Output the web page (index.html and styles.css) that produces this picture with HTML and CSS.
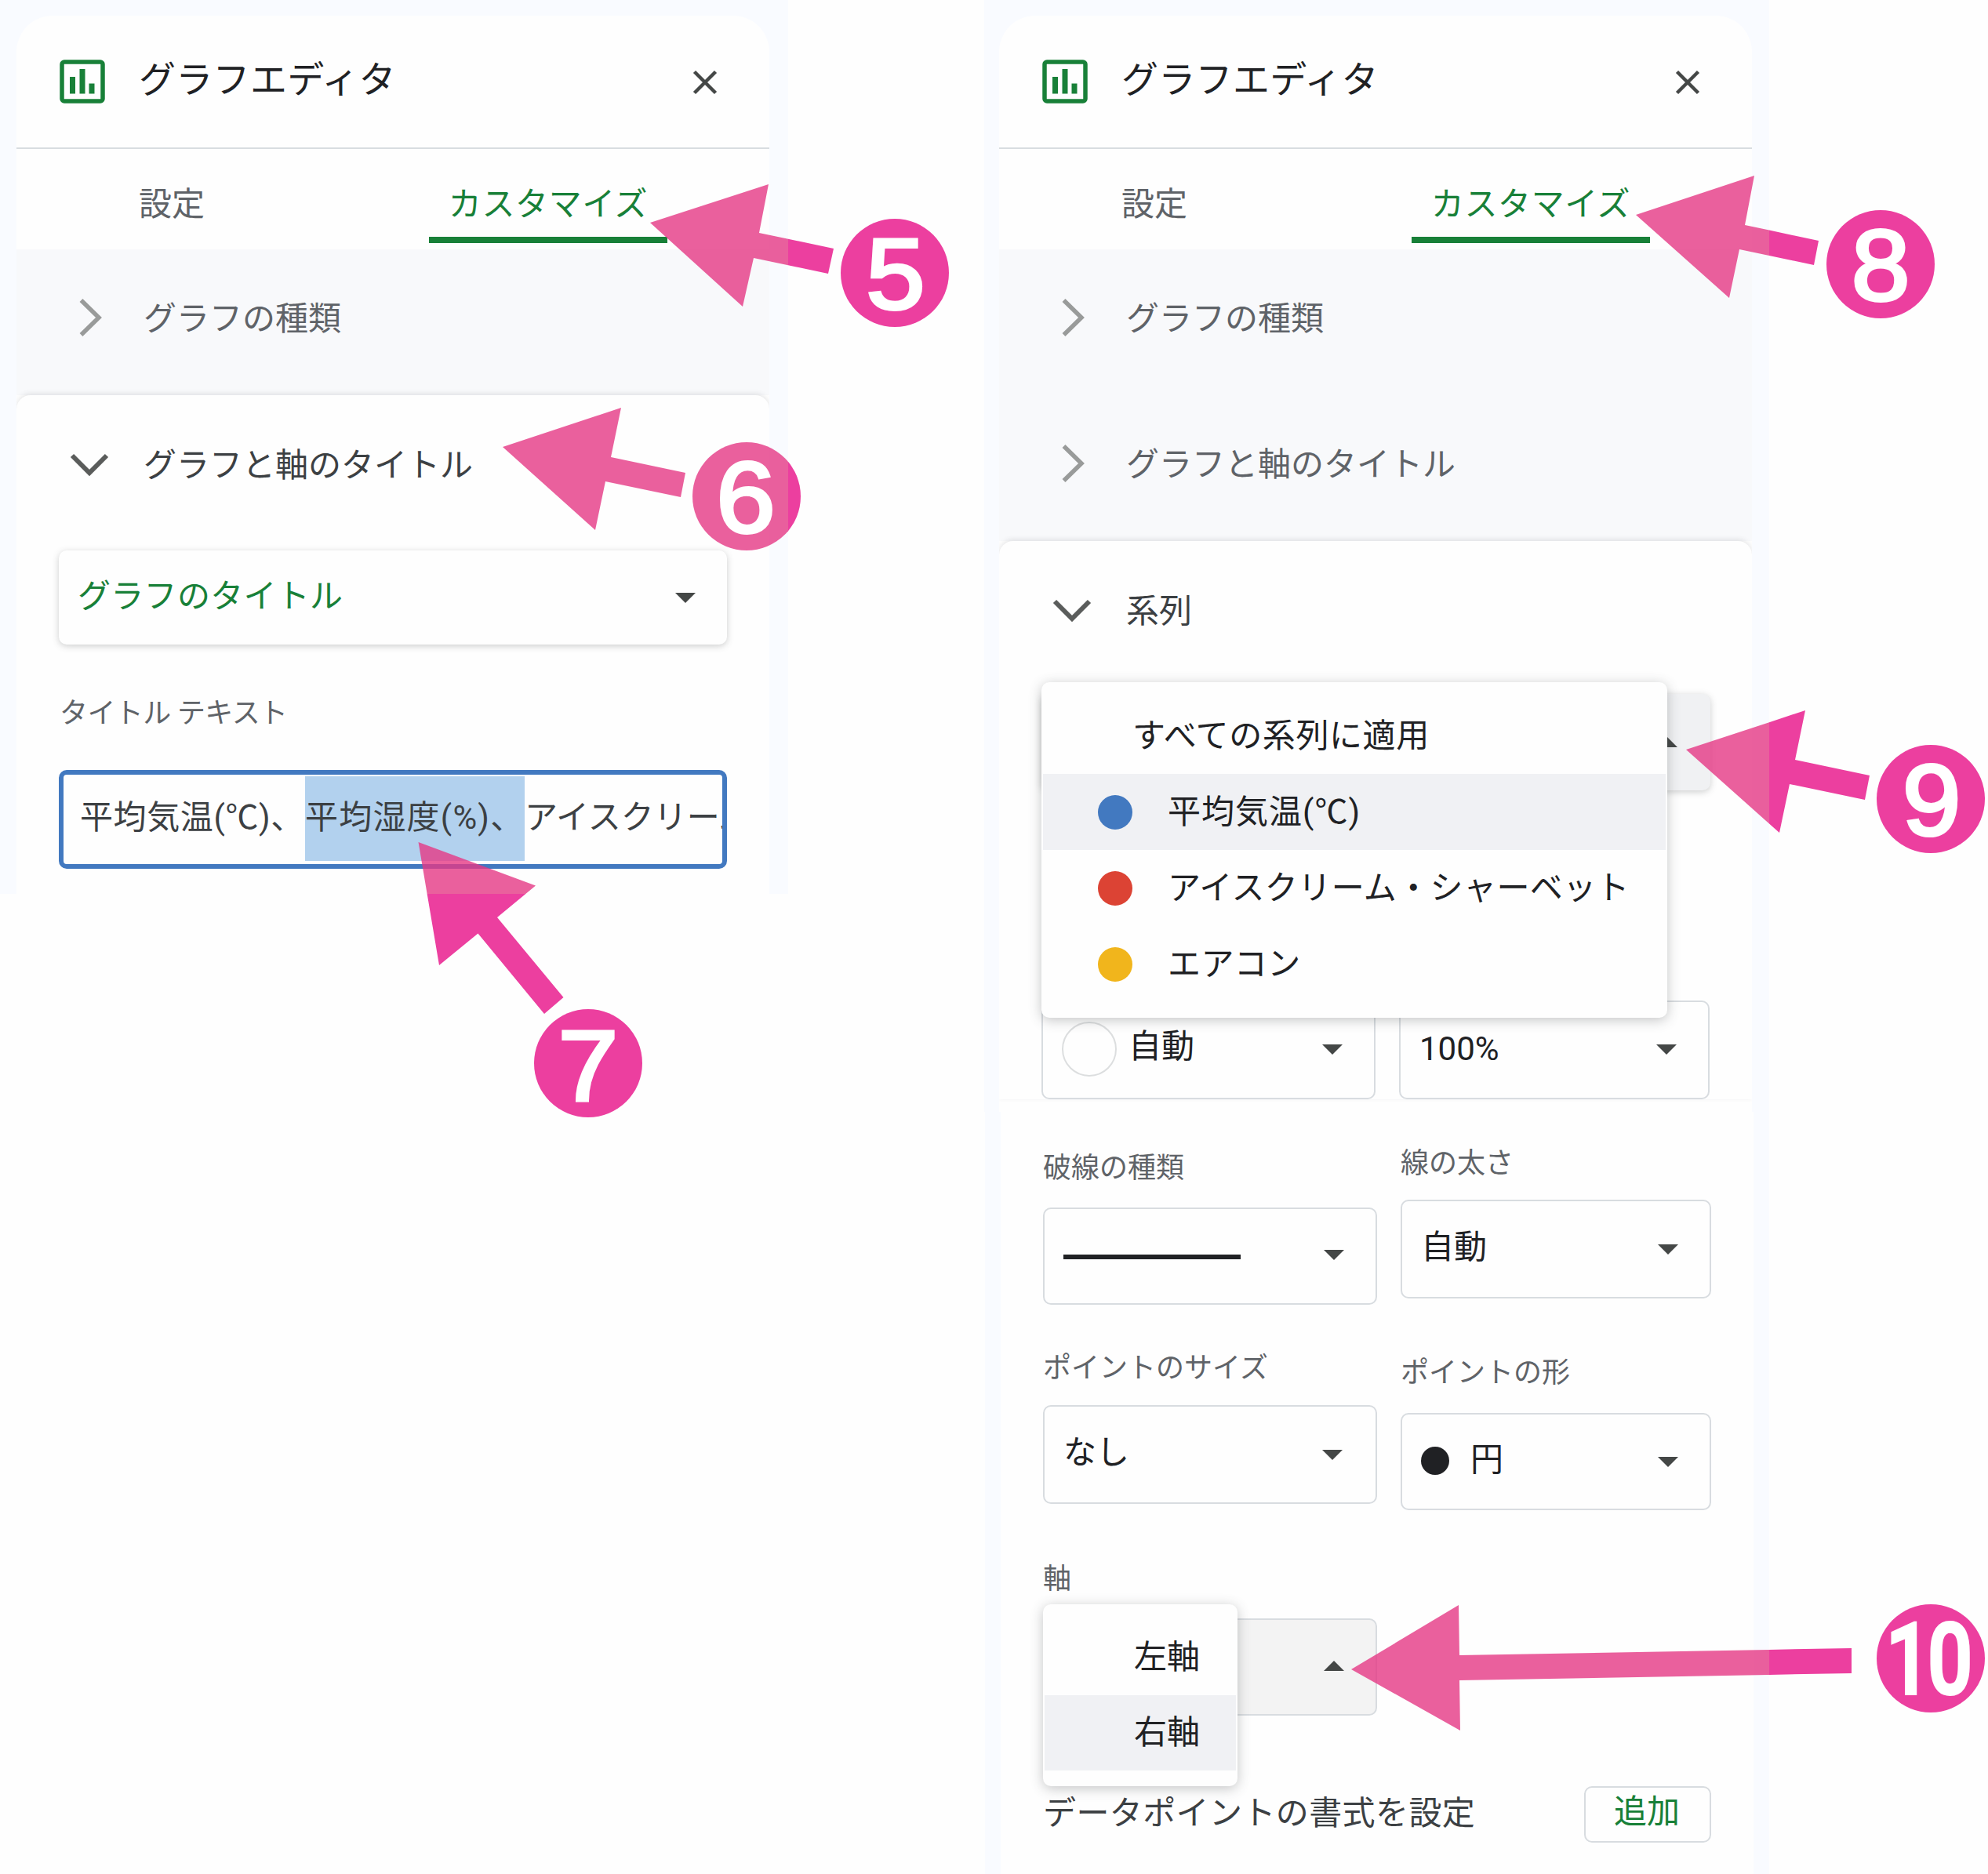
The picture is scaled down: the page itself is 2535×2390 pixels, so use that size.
FILE: index.html
```html
<!DOCTYPE html>
<html lang="ja">
<head>
<meta charset="utf-8">
<title>グラフエディタ</title>
<link rel="stylesheet" href="styles.css">
</head>
<body>
<svg class="defs" width="0" height="0">
  <symbol id="chart" viewBox="0 0 58 56"><rect x="3" y="3" width="52" height="50" rx="3" fill="none" stroke="#188038" stroke-width="5.500"/><path d="M16.500 22v21.500M29 12v31.500M41 30.500v13" stroke="#188038" stroke-width="7" fill="none"/></symbol>
  <symbol id="close" viewBox="0 0 32 32"><path d="M2.500 2.500l27 27M29.500 2.500l-27 27" stroke="#444746" stroke-width="4.500" fill="none"/></symbol>
  <symbol id="right" viewBox="0 0 30 50"><path d="M2.500 3L25 25L2.500 47" stroke="#999b9a" stroke-width="5.500" fill="none"/></symbol>
  <symbol id="down" viewBox="0 0 50 30"><path d="M3 3L25 25L47 3" stroke="#5a5c5b" stroke-width="6" fill="none"/></symbol>
  <symbol id="tri" viewBox="0 0 26 13"><path d="M0 0H26L13 13Z" fill="#444746"/></symbol>
</svg>

<main class="stage">
  <section class="shot shot-left">
    <div class="card">
      <header class="head"><svg class="i-chart"><use href="#chart"/></svg><h1>グラフエディタ</h1><svg class="i-close"><use href="#close"/></svg></header>
      <nav class="tabs"><span class="tab">設定</span><span class="tab on">カスタマイズ</span></nav>
      <div class="fold"><svg class="i-right"><use href="#right"/></svg><span>グラフの種類</span></div>
      <div class="open">
        <div class="fold cur"><svg class="i-down"><use href="#down"/></svg><span>グラフと軸のタイトル</span></div>
        <div class="pick"><span>グラフのタイトル</span><svg class="tri"><use href="#tri"/></svg></div>
        <p class="label title-label">タイトル テキスト</p>
        <div class="field"><span class="plain">平均気温(℃)、</span><span class="sel">平均湿度(%)、</span><span class="rest">アイスクリーム</span></div>
      </div>
    </div>
  </section>

  <section class="shot shot-right">
    <div class="upper">
      <div class="card">
        <header class="head"><svg class="i-chart"><use href="#chart"/></svg><h1>グラフエディタ</h1><svg class="i-close"><use href="#close"/></svg></header>
        <nav class="tabs"><span class="tab">設定</span><span class="tab on">カスタマイズ</span></nav>
        <div class="fold"><svg class="i-right"><use href="#right"/></svg><span>グラフの種類</span></div>
        <div class="fold second"><svg class="i-right"><use href="#right"/></svg><span>グラフと軸のタイトル</span></div>
        <div class="open">
          <div class="fold cur series"><svg class="i-down"><use href="#down"/></svg><span>系列</span></div>
          <div class="pick pressed"><svg class="tri up"><use href="#tri"/></svg>
            <ul class="menu menu-series">
              <li class="all">すべての系列に適用</li>
              <li class="hot"><i class="dot blue"></i>平均気温(℃)</li>
              <li><i class="dot red"></i>アイスクリーム・シャーベット</li>
              <li><i class="dot yellow"></i>エアコン</li>
            </ul>
          </div>
          <div class="pair">
            <div class="box w1"><i class="ring"></i><span class="t-auto">自動</span><svg class="tri"><use href="#tri"/></svg></div>
            <div class="box w2 pct"><span>100%</span><svg class="tri"><use href="#tri"/></svg></div>
          </div>
        </div>
      </div>
    </div>
    <div class="lower">
      <div class="card">
        <div class="cols">
          <div class="col w1">
            <p class="label l1">破線の種類</p>
            <div class="box b1"><i class="line"></i><svg class="tri"><use href="#tri"/></svg></div>
            <p class="label l3">ポイントのサイズ</p>
            <div class="box b3"><span>なし</span><svg class="tri"><use href="#tri"/></svg></div>
            <p class="label l5">軸</p>
            <div class="box b5"><svg class="tri up"><use href="#tri"/></svg>
              <ul class="menu menu-axis"><li>左軸</li><li class="hot">右軸</li></ul>
            </div>
          </div>
          <div class="col w2">
            <p class="label l2">線の太さ</p>
            <div class="box b2"><span>自動</span><svg class="tri"><use href="#tri"/></svg></div>
            <p class="label l4">ポイントの形</p>
            <div class="box b4"><i class="point"></i><span>円</span><svg class="tri"><use href="#tri"/></svg></div>
          </div>
        </div>
        <div class="foot"><span>データポイントの書式を設定</span><button class="add">追加</button></div>
      </div>
    </div>
  </section>
</main>

<svg class="notes" viewBox="0 0 2535 2390">
  <defs>
    <clipPath id="inside"><path d="M0 0H1005V1140H0ZM1255 0H2256V2390H1255Z"/></clipPath>
    <clipPath id="outside"><path clip-rule="evenodd" d="M0 0H2535V2390H0ZM0 0H1005V1140H0ZM1255 0H2256V2390H1255Z"/></clipPath>
    <g id="marks">
      <path d="M829 284L980 235L968 297L1063 317L1056 349L961 329L947 391Z"/>
      <path d="M641 570L792 520L779 583L874 603L868 634L772 614L759 676Z"/>
      <path d="M533.500 1074L683 1129.500L634 1170L718.500 1272L694 1293L609.500 1190.500L560 1231Z"/>
      <path d="M2086 274L2237 224L2225 287L2319 307L2313 338L2218 318L2205 380Z"/>
      <path d="M2150 956L2302 906L2289 969L2384 989L2378 1020L2282 1000L2269 1062Z"/>
      <path d="M1723 2129L1860 2047L1861 2111L2361 2102V2134L1861 2143L1862 2207Z"/>
      <circle cx="1141" cy="348" r="69"/><circle cx="952" cy="633" r="69"/><circle cx="750" cy="1356" r="69"/>
      <circle cx="2398" cy="337" r="69"/><circle cx="2462" cy="1019" r="69"/><circle cx="2462" cy="2115" r="69"/>
    </g>
  </defs>
  <use href="#marks" class="m-out" clip-path="url(#outside)"/>
  <use href="#marks" class="m-in" clip-path="url(#inside)"/>
  <g class="num">
    <text transform="translate(1142 394) scale(1.06 1)">5</text>
    <text transform="translate(951 679) scale(1.06 1)">6</text>
    <text transform="translate(750 1404) scale(1.08 1)">7</text>
    <text transform="translate(2398 383) scale(1.05 1)">8</text>
    <text transform="translate(2463 1065) scale(1.05 1)">9</text>
    <text class="ten" transform="translate(2458 2160) scale(.8 1)">10</text>
  </g>
</svg>
</body>
</html>
```
FILE: styles.css
```css
* { box-sizing: border-box; }
body {
  margin: 0;
  background: #fefefe;
  font: 42px/60px Roboto, "Noto Sans CJK JP", sans-serif;
  color: #202124;
}
h1, p, ul { margin: 0; padding: 0; list-style: none; font-weight: 400; }
svg { display: block; flex: none; }
.defs { position: absolute; }
.stage { display: flex; align-items: flex-start; width: 2535px; height: 2390px; position: relative; overflow: hidden; white-space: nowrap; }

.shot-left { width: 1005px; height: 1140px; padding: 20px 24px 0 21px; background: #f9fbff; }
.shot-right { margin-left: 250px; width: 1001px; }
.upper { height: 1418px; padding: 20px 22px 0 19px; background: #f9fbff; }
.lower { height: 972px; margin-left: 1px; padding: 0 20px; background: #f9fbff; }
.card { background: #fefefe; height: 100%; }
.shot-left .card, .upper .card { border-radius: 46px 46px 0 0; overflow: hidden; }

.head { display: flex; align-items: flex-start; height: 170px; padding: 56px 66px 0 55px; border-bottom: 2px solid #d8dde0; }
.i-chart { width: 58px; height: 56px; }
.head h1 { margin: -8px auto 0 43px; font-size: 47px; line-height: 68px; letter-spacing: .3px; }
.i-close { width: 32px; height: 32px; margin-top: 13px; }

.tabs { display: flex; height: 128px; padding: 0 130px 0 156px; justify-content: space-between; color: #5f6368; }
.tab { padding-top: 41px; height: 120px; }
.tab.on { width: 304px; text-align: center; color: #188038; border-bottom: 8px solid #188038; border-radius: 6px 6px 0 0; letter-spacing: .6px; }

.fold { display: flex; align-items: center; height: 186px; padding: 0 0 12px 80px; background: #f8f9fb; color: #5f6368; }
.fold span { margin-top: 4px; }
.i-right { width: 30px; height: 50px; margin-right: 52px; }
.fold.second { padding-top: 0; }
.open { position: relative; background: #fefefe; border-radius: 18px 18px 0 0; box-shadow: 0 -2px 6px rgba(60, 64, 67, .13); min-height: 640px; }
.open .cur { background: none; color: #3c4043; height: 198px; padding: 0 0 21px 68px; }
.open .cur span { margin-top: 2px; }
.i-down { width: 50px; height: 30px; margin-right: 44px; }
.open .series { height: 195px; padding-bottom: 18px; }

.tri { width: 26px; height: 13px; margin-left: auto; }
.tri.up { transform: rotate(180deg); }
.pick { display: flex; align-items: center; margin: 0 54px 0 54px; height: 120px; padding: 0 40px 0 24px; border-radius: 10px; background: #fefefe; color: #188038; box-shadow: 0 2px 8px rgba(60, 64, 67, .26); }
.pick span { margin-top: -3px; letter-spacing: .3px; }
.label { font-size: 36px; line-height: 50px; color: #5f6368; }
.title-label { margin: 63px 0 0 55px; letter-spacing: -.6px; }
.field { display: flex; margin: 47px 54px 0 54px; height: 126px; padding: 2px 0 2px 21px; border: 6px solid #4279c0; border-radius: 10px; overflow: hidden; color: #3c4043; line-height: 106px; }
.field span { flex: none; }
.plain { width: 287px; letter-spacing: .6px; }
.sel { width: 280px; height: 108px; background: #b2d1ee; letter-spacing: 1.2px; }

.pick.pressed { position: relative; height: 123px; background: #f0f1f3; margin: 0 53px 0 54px; padding-right: 42px; }
.menu { position: absolute; z-index: 2; background: #fefefe; border-radius: 10px; box-shadow: 0 3px 16px rgba(60, 64, 67, .3); color: #202124; }
.menu li { display: flex; align-items: center; margin: 0 2px; }
.menu .hot { background: #f0f1f4; }
.menu-series { left: 0; top: -15px; width: 798px; height: 428px; padding-top: 20px; }
.menu-series li { height: 97px; padding-left: 70px; letter-spacing: .4px; }
.menu-series .hot { letter-spacing: 1px; }
.menu-series .all { padding-left: 114px; letter-spacing: .6px; }
.dot { width: 44px; height: 44px; border-radius: 50%; margin-right: 45px; }
.blue { background: #4279c0; }
.red { background: #dc4334; }
.yellow { background: #f1b51c; }

.pair { display: flex; justify-content: space-between; margin: 268px 54px 0 54px; }
.w1 { width: 426px; }
.w2 { width: 396px; }
.box { display: flex; align-items: center; position: relative; height: 124px; padding: 0 40px 0 24px; border: 2px solid #d8dce0; border-radius: 10px; }
.pair .box { height: 126px; padding-bottom: 2px; }
.ring { width: 70px; height: 70px; border: 2px solid #dcdedf; border-radius: 50%; margin-right: 15px; }
.t-auto { margin-top: -6px; }

.cols { display: flex; justify-content: space-between; padding: 0 54px; height: 770px; }
.l1 { margin-top: 47px; }
.b1 { margin-top: 25px; }
.line { width: 226px; height: 6px; margin-top: 2px; background: #202124; }
.b1 .tri { margin-top: -3px; }
.l3 { margin-top: 56px; }
.b3 { margin-top: 22px; height: 126px; }
.b3 span { margin: -4px 0 0 0; }
.b3 .tri { margin-right: 2px; }
.l5 { margin-top: 71px; }
.b5 { margin-top: 25px; background: #f3f3f3; }
.b5 .tri { margin-top: -3px; }
.l2 { margin-top: 41px; }
.b2 { margin-top: 21px; height: 126px; }
.b2 span { margin: -5px 0 0 0; }
.l4 { margin-top: 70px; }
.b4 { margin-top: 26px; }
.point { width: 36px; height: 36px; margin-right: 27px; margin-top: -2px; border-radius: 50%; background: #202124; }
.b4 span { margin-top: -4px; }
.menu-axis { left: -2px; top: -20px; width: 248px; height: 232px; padding-top: 20px; }
.menu-axis li { height: 96px; padding-left: 114px; }

.foot { display: flex; justify-content: space-between; align-items: flex-start; padding: 90px 54px 0 54px; color: #3c4043; line-height: 70px; letter-spacing: .4px; }
.add { width: 162px; height: 72px; padding: 0 2px 6px 0; border: 2px solid #d8dce0; border-radius: 10px; background: #fefefe; font: inherit; line-height: 60px; color: #188038; }

.notes { position: absolute; left: 0; top: 0; width: 2535px; height: 2390px; z-index: 5; }
.m-out { fill: #ec3f9f; }
.m-in { fill: #e53884; fill-opacity: .8; }
.num { font: 128px "Liberation Sans", sans-serif; fill: #fff; stroke: #fff; stroke-width: 4px; text-anchor: middle; }
.ten { font: 500 126px Roboto, sans-serif; letter-spacing: -5px; }
```
